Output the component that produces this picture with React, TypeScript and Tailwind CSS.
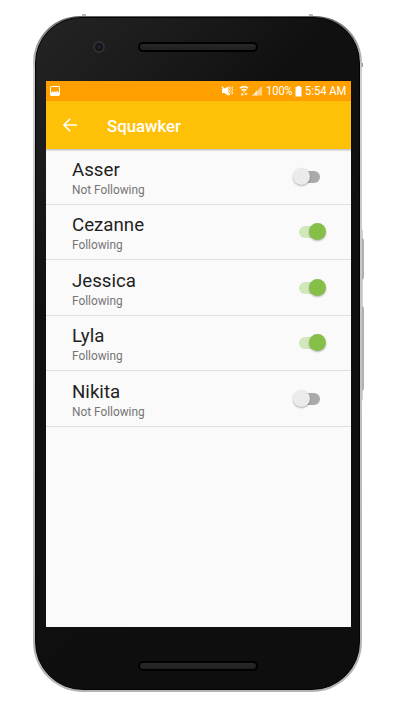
import React from "react";

type Person = { name: string; following: boolean };

const people: Person[] = [
  { name: "Asser", following: false },
  { name: "Cezanne", following: true },
  { name: "Jessica", following: true },
  { name: "Lyla", following: true },
  { name: "Nikita", following: false },
];

function Toggle({ on }: { on: boolean }) {
  return (
    <div
      role="switch"
      aria-checked={on}
      className={`relative mt-px h-3 w-[21px] rounded-full ${on ? "bg-[#d3e7bd]" : "bg-[#aaaaaa]"}`}
    >
      <div
        className={`absolute -top-[3px] size-[17px] rounded-full shadow-[0_1px_2px_rgba(0,0,0,0.3)] ${
          on ? "left-[10px] bg-[#86bf48]" : "-left-[6px] bg-[#ebebeb]"
        }`}
      />
    </div>
  );
}

function Row({ person }: { person: Person }) {
  return (
    <li className="flex h-[55.5px] items-center justify-between border-b border-[#dfdfdf] pr-[31px] pl-[26px]">
      <div className="h-[37px]">
        <div className="text-[18.7px] leading-[24px] text-[#1f1f1f]">{person.name}</div>
        <div className="text-[11.85px] leading-4 text-[#757575]">
          {person.following ? "Following" : "Not Following"}
        </div>
      </div>
      <Toggle on={person.following} />
    </li>
  );
}

function StatusBar() {
  return (
    <div className="flex h-5 shrink-0 items-center bg-[#ffa000] pr-[3px] pl-1 text-white">
      <svg width="10" height="10" viewBox="0 0 10 10" fill="none">
        <rect x="0.5" y="0.5" width="9" height="9" rx="0.6" stroke="#fff" />
        <path d="M1 7 2.6 5.2l1 1L5 5.2l1 1 1.4-1.4L9 7v2H1z" fill="#fff" />
      </svg>
      <svg className="ml-auto" width="42" height="12" viewBox="0 0 42 12" fill="none">
        {/* muted speaker with vibration marks */}
        <path d="M1 3.8h2.3L7.5 1.2v9.6L3.3 8H1z" fill="#fff" />
        <path d="M1 1.6 8.4 10.2" stroke="#fff" strokeWidth="1.2" />
        <path d="m9.3 1.5-.8 1.6.8 1.6-.8 1.6.8 1.6-.8 1.6M11.6 1.5l-.8 1.6.8 1.6-.8 1.6.8 1.6-.8 1.6" stroke="#fff" strokeWidth="0.9" />
        {/* wifi with data arrows */}
        <path d="M19 3.2q4-3.2 8 0M20.6 5.4q2.4-1.9 4.8 0" stroke="#fff" strokeWidth="1.6" />
        <path d="M21.8 6.2h2.4L23 8z" fill="#fff" />
        <path d="m21.3 7.8 1.6 2.4h-3.2zM25 10.6l1.6-2.3h-3.2z" fill="#fff" />
        {/* cellular signal */}
        <path d="M31 10.5 41 1v9.5z" fill="#ffd080" />
        <path d="M31 10.5h2V8.7l-2 1.8zM33.8 7.9l2.2-2.1v4.7h-2.2z" fill="#ffefd2" />
      </svg>
      <span className="ml-[3px] w-[27px] text-[12px] leading-5 whitespace-nowrap">
        <span className="inline-block origin-left scale-x-[0.92]">100%</span>
      </span>
      <svg className="ml-[2px]" width="7" height="11" viewBox="0 0 7 11">
        <path d="M2 0h3v1h1.5v9.5h-6V1H2z" fill="#fff" />
      </svg>
      <span className="ml-[3px] w-[43px] text-[12px] leading-5 whitespace-nowrap">
        <span className="inline-block origin-left scale-x-[0.93]">5:54 AM</span>
      </span>
    </div>
  );
}

function Grille() {
  return (
    <div className="h-[10px] w-[120px] rounded-full border-2 border-black bg-linear-to-b from-[#282828] to-[#202020]" />
  );
}

export default function App() {
  return (
    <div className="relative h-[711px] w-[400px] overflow-hidden bg-white pt-4 pl-[33px] font-['Roboto',sans-serif]">
      {/* frame seams and side buttons */}
      <div className="absolute top-[14px] left-[82px] h-[3px] w-1 bg-[#b9b9b9]" />
      <div className="absolute top-[14px] left-[309px] h-[3px] w-1 bg-[#b9b9b9]" />
      <div className="absolute top-[63px] left-[33px] h-1 w-[3px] bg-[#999]" />
      <div className="absolute top-[63px] left-[360px] h-1 w-[3px] bg-[#999]" />
      <div className="absolute top-[230px] left-[360px] h-[170px] w-[3px] bg-[#d5d3d5]" />
      <div className="absolute top-[238px] left-[361px] h-[42px] w-[3px] rounded-r-sm bg-[#b2b0b2]" />
      <div className="absolute top-[306px] left-[361px] h-[85px] w-[3px] rounded-r-sm bg-[#b2b0b2]" />

      <div className="relative h-[676px] w-[329px] rounded-t-[47px] rounded-b-[50px] bg-linear-to-b from-[#666] via-[#d0d0d0] via-8% to-[#b4b4b4] pt-px pr-[2px] pb-[2px] pl-[2px]">
        <div className="flex h-full flex-col rounded-t-[46px] rounded-b-[48px] border border-[#030303] bg-[linear-gradient(135deg,#242424_0%,#1b1b1b_15%,#101010_30%,#0e0e0e_100%)] pr-[9px] pl-[10px]">
          <header className="flex h-[63px] items-center pl-[47px]">
            <div className="mt-[-5px] flex size-3 items-center justify-center rounded-full border-2 border-[#303030] bg-[#15131a]">
              <div className="size-1 rounded-full bg-[#22202a]" />
            </div>
            <div className="mt-[-5px] ml-[33px]">
              <Grille />
            </div>
          </header>

          <main className="flex h-[546px] w-[305px] shrink-0 flex-col bg-[#fafafa]">
            <StatusBar />
            <div className="relative flex h-12 shrink-0 items-center bg-[#ffc107] pl-[17px] text-white shadow-[0_1px_2px_rgba(0,0,0,0.3)]">
              <svg width="14" height="14" viewBox="0 0 14 14" fill="none" stroke="#fff" strokeWidth="1.6">
                <path d="M14 7H1M7.2.8 1 7l6.2 6.2" />
              </svg>
              <h1 className="mt-px ml-[30px] text-[16.8px] leading-6 font-medium">Squawker</h1>
            </div>
            <ul>
              {people.map((person) => (
                <Row key={person.name} person={person} />
              ))}
            </ul>
          </main>

          <footer className="flex h-[62px] items-start pt-[34px] pl-[92px]">
            <Grille />
          </footer>
        </div>
      </div>
    </div>
  );
}
